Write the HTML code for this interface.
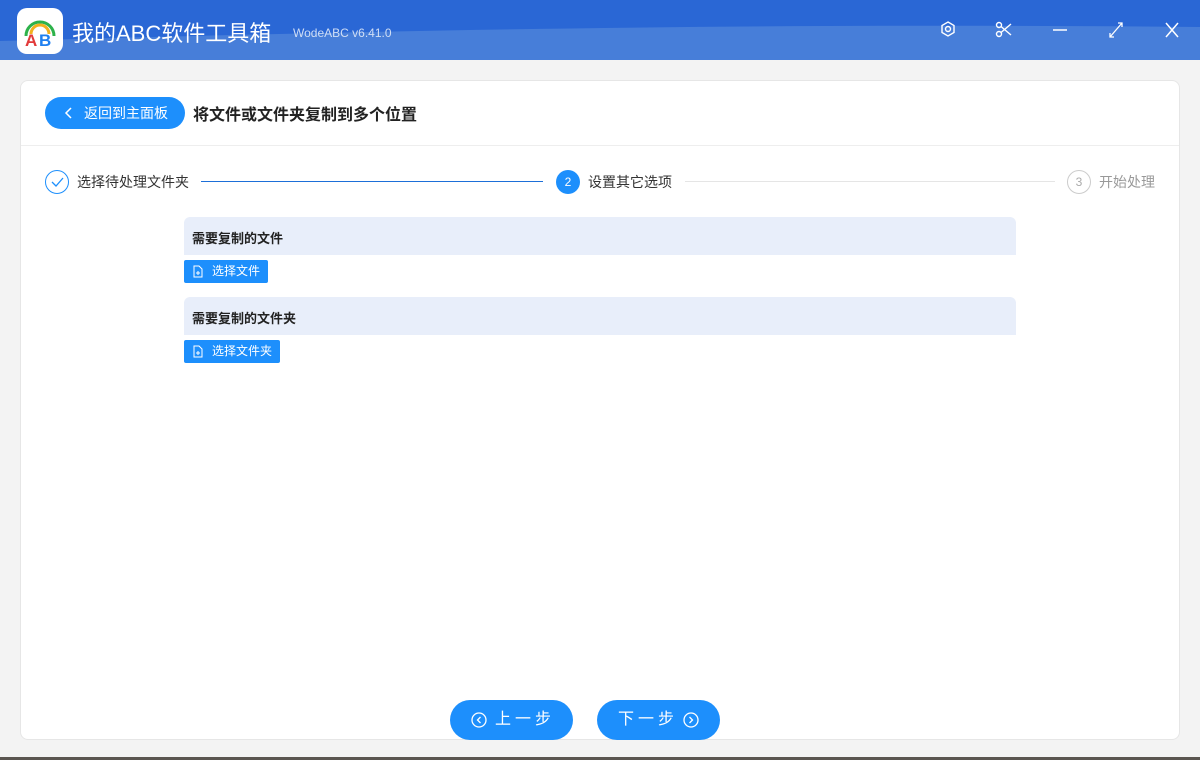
<!DOCTYPE html>
<html><head><meta charset="utf-8"><style>
*{margin:0;padding:0;box-sizing:border-box}
body{width:1200px;height:760px;overflow:hidden;background:#f3f3f3;font-family:"Liberation Sans","Noto Sans CJK SC",sans-serif;position:relative}
.tb{position:absolute;left:0;top:0;width:1200px;height:60px;background:#2a67d5;overflow:hidden}
.logo{position:absolute;left:17px;top:8px;width:46px;height:46px;background:#fff;border-radius:10px}
.tt{position:absolute;left:72px;top:16px;color:#fff;font-size:22px}
.ver{position:absolute;left:293px;top:26px;color:#d0def5;font-size:12px}
.ic{position:absolute;top:20px}
.card{position:absolute;left:20px;top:80px;width:1160px;height:660px;background:#fff;border:1px solid #e6e6e6;border-radius:8px}
.back{position:absolute;left:45px;top:97px;width:140px;height:32px;background:#1d8ffc;border-radius:16px;color:#fff;font-size:14px;line-height:32px;padding-left:39px}
.h1{position:absolute;left:193px;top:101px;font-size:16px;font-weight:bold;color:#222}
.sep{position:absolute;left:21px;top:145px;width:1158px;height:1px;background:#eee}
.st{position:absolute;top:172px;font-size:14px;color:#333}
.circ{position:absolute;top:170px;width:24px;height:24px;border-radius:50%;font-size:12px;text-align:center;line-height:22px}
.sec{position:absolute;left:184px;width:832px;height:38px;background:#e8eefa;border-radius:6px 6px 0 0;font-size:13px;font-weight:bold;color:#222;padding:11px 0 0 8px}
.btn{position:absolute;left:184px;height:23px;background:#1d8ffc;border-radius:2px;color:#fff;font-size:12px;line-height:23px;padding-left:28px}
.nb{position:absolute;top:700px;width:123px;height:40px;background:#1d8ffc;border-radius:20px;color:#fff;font-size:16px;line-height:40px;letter-spacing:4px}
</style></head><body>
<div class="tb"><svg style="position:absolute;left:0;top:0" width="1200" height="60"><path d="M0 41 C300 33 700 22 1200 27 L1200 60 L0 60Z" fill="#477ed9"/></svg>
<div class="logo"><svg width="46" height="46"><path d="M9 28 A14 14 0 0 1 37 28" fill="none" stroke="#2db24a" stroke-width="3"/><path d="M14 26 A9 9 0 0 1 32 26" fill="none" stroke="#f2b01e" stroke-width="3"/><text x="8" y="38" font-size="17" font-weight="bold" fill="#e23a3a" font-family="Liberation Sans">A</text><text x="22" y="38" font-size="17" font-weight="bold" fill="#1f7ff0" font-family="Liberation Sans">B</text></svg></div>
<div class="tt">我的ABC软件工具箱</div><div class="ver">WodeABC v6.41.0</div>
<svg class="ic" style="left:939px" width="18" height="20" viewBox="0 0 18 20"><path d="M9 2l6 3.5v7L9 16l-6-3.5v-7z" fill="none" stroke="#fff" stroke-width="1.4"/><circle cx="9" cy="9" r="2.5" fill="none" stroke="#fff" stroke-width="1.4"/></svg>
<svg class="ic" style="left:995px" width="18" height="20" viewBox="0 0 18 20"><circle cx="4" cy="5" r="2.5" fill="none" stroke="#fff" stroke-width="1.4"/><circle cx="4" cy="14" r="2.5" fill="none" stroke="#fff" stroke-width="1.4"/><path d="M6 6.5L16 15M6 12.5L16 4" stroke="#fff" stroke-width="1.4"/></svg>
<svg class="ic" style="left:1052px" width="16" height="20"><path d="M1 10h14" stroke="#fff" stroke-width="1.5"/></svg>
<svg class="ic" style="left:1108px" width="16" height="20"><path d="M2 17L14 3M10 3h4v4M2 13v4h4" fill="none" stroke="#fff" stroke-width="1.3"/></svg>
<svg class="ic" style="left:1164px" width="16" height="20"><path d="M2 3l12 14M14 3L2 17" stroke="#fff" stroke-width="1.5"/></svg>
</div>
<div class="card"></div>
<div class="back"><svg style="position:absolute;left:19px;top:10px" width="8" height="12"><path d="M7 1L2 6l5 5" fill="none" stroke="#fff" stroke-width="1.5"/></svg>返回到主面板</div>
<div class="h1">将文件或文件夹复制到多个位置</div>
<div class="sep"></div>
<div class="circ" style="left:45px;border:1px solid #1d8ffc"><svg width="22" height="22"><path d="M6 11l4 4 7-8" fill="none" stroke="#1d8ffc" stroke-width="1.3"/></svg></div>
<div class="st" style="left:77px">选择待处理文件夹</div>
<div style="position:absolute;left:201px;top:181px;width:342px;height:1px;background:#1d6fd8"></div>
<div class="circ" style="left:556px;background:#1d8ffc;color:#fff;line-height:24px">2</div>
<div class="st" style="left:588px">设置其它选项</div>
<div style="position:absolute;left:685px;top:181px;width:370px;height:1px;background:#e5e5e5"></div>
<div class="circ" style="left:1067px;border:1px solid #ccc;color:#aaa">3</div>
<div class="st" style="left:1099px;color:#999">开始处理</div>
<div class="sec" style="top:217px">需要复制的文件</div>
<div class="btn" style="top:260px;width:84px"><svg style="position:absolute;left:9px;top:5px" width="10" height="13"><path d="M1 1h5l3 3v8H1z" fill="none" stroke="#fff"/><path d="M5 6v4M3 8h4" stroke="#fff"/></svg>选择文件</div>
<div class="sec" style="top:297px">需要复制的文件夹</div>
<div class="btn" style="top:340px;width:96px"><svg style="position:absolute;left:9px;top:5px" width="10" height="13"><path d="M1 1h5l3 3v8H1z" fill="none" stroke="#fff"/><path d="M5 6v4M3 8h4" stroke="#fff"/></svg>选择文件夹</div>
<div class="nb" style="left:450px;padding-left:45px"><svg style="position:absolute;left:21px;top:12px" width="16" height="16"><circle cx="8" cy="8" r="7" fill="none" stroke="#fff" stroke-width="1.3"/><path d="M9.5 5L6.5 8l3 3" fill="none" stroke="#fff" stroke-width="1.3"/></svg>上一步</div>
<div class="nb" style="left:597px;padding-left:21px">下一步<svg style="position:absolute;left:86px;top:12px" width="16" height="16"><circle cx="8" cy="8" r="7" fill="none" stroke="#fff" stroke-width="1.3"/><path d="M6.5 5l3 3-3 3" fill="none" stroke="#fff" stroke-width="1.3"/></svg></div>
<div style="position:absolute;left:0;top:757px;width:1200px;height:3px;background:#5a5550"></div>
</body></html>
